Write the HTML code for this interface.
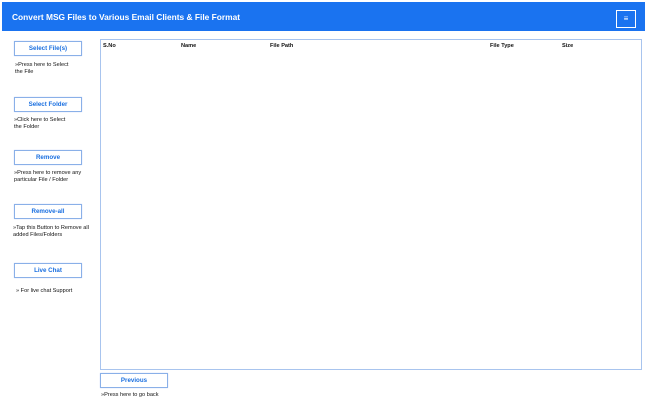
<html><head><style>
body{margin:0;width:648px;height:405px;background:#fff;font-family:"Liberation Sans",sans-serif;position:relative;overflow:hidden}
.hd{position:absolute;left:2px;top:2px;width:643px;height:29px;background:#1a73f0}
.hd span{position:absolute;left:10px;top:10px;color:#fff;font-weight:bold;font-size:8.4px}
.mn{position:absolute;left:614px;top:8px;width:18px;height:16px;border:1px solid #fff;color:#fff;font-size:8px;text-align:center;line-height:16px}
.b{position:absolute;width:66px;height:13px;border:1px solid #8ab0e8;color:#1a6fe0;font-weight:bold;font-size:6.2px;text-align:center;line-height:13px;box-shadow:0 0 1px #c0d4f4}
.t{position:absolute;font-size:5.6px;line-height:7px;color:#111}
.tb{position:absolute;left:100px;top:39px;width:540px;height:329px;border:1px solid #a8c4ee}
.h{position:absolute;top:3px;font-size:5.6px;font-weight:bold;color:#111}
</style></head><body>
<div class="hd"><span>Convert MSG Files to Various Email Clients &amp; File Format</span><div class="mn">≡</div></div>
<div class="b" style="left:14px;top:41px">Select File(s)</div>
<div class="t" style="left:15px;top:62px">»Press here to Select<br>the File</div>
<div class="b" style="left:14px;top:97px">Select Folder</div>
<div class="t" style="left:14px;top:117px">»Click here to Select<br>the Folder</div>
<div class="b" style="left:14px;top:150px">Remove</div>
<div class="t" style="left:14px;top:170px">»Press here to remove any<br>particular File / Folder</div>
<div class="b" style="left:14px;top:204px">Remove-all</div>
<div class="t" style="left:13px;top:225px">»Tap this Button to Remove all<br>added Files/Folders</div>
<div class="b" style="left:14px;top:263px">Live Chat</div>
<div class="t" style="left:16px;top:288px">» For live chat Support</div>
<div class="tb">
<div class="h" style="left:2px">S.No</div>
<div class="h" style="left:80px">Name</div>
<div class="h" style="left:169px">File Path</div>
<div class="h" style="left:389px">File Type</div>
<div class="h" style="left:461px">Size</div>
</div>
<div class="b" style="left:100px;top:373px">Previous</div>
<div class="t" style="left:101px;top:392px">»Press here to go back</div>
</body></html>
